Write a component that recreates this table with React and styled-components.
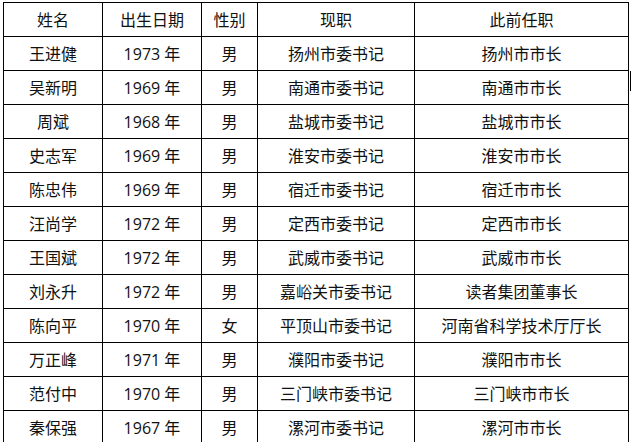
import styled, { createGlobalStyle } from "styled-components";

const GlobalStyle = createGlobalStyle`
  html, body {
    margin: 0;
    padding: 0;
    background: #fff;
    overflow: hidden;
  }
  body {
    font-family: "Open Sans", "Noto Sans CJK SC", sans-serif;
  }
`;

const columns = [
  { key: "name", label: "姓名", width: 99 },
  { key: "born", label: "出生日期", width: 99 },
  { key: "sex", label: "性别", width: 56 },
  { key: "now", label: "现职", width: 157 },
  { key: "before", label: "此前任职", width: 214 },
];

const template = columns.map((c) => `${c.width}px`).join(" ");

const rows = [
  ["王进健", "1973 年", "男", "扬州市委书记", "扬州市市长"],
  ["吴新明", "1969 年", "男", "南通市委书记", "南通市市长"],
  ["周斌", "1968 年", "男", "盐城市委书记", "盐城市市长"],
  ["史志军", "1969 年", "男", "淮安市委书记", "淮安市市长"],
  ["陈忠伟", "1969 年", "男", "宿迁市委书记", "宿迁市市长"],
  ["汪尚学", "1972 年", "男", "定西市委书记", "定西市市长"],
  ["王国斌", "1972 年", "男", "武威市委书记", "武威市市长"],
  ["刘永升", "1972 年", "男", "嘉峪关市委书记", "读者集团董事长"],
  ["陈向平", "1970 年", "女", "平顶山市委书记", "河南省科学技术厅厅长"],
  ["万正峰", "1971 年", "男", "濮阳市委书记", "濮阳市市长"],
  ["范付中", "1970 年", "男", "三门峡市委书记", "三门峡市市长"],
  ["秦保强", "1967 年", "男", "漯河市委书记", "漯河市市长"],
];

const Page = styled.div`
  position: relative;
  padding: 2px 0 0 3px;
`;

const Table = styled.div`
  display: flex;
  flex-direction: column;
  width: 625px;
  border-left: 1px solid #000;
  border-top: 1px solid #000;
  color: #111;
  font-size: 16px;
`;

const Row = styled.div`
  display: grid;
  grid-template-columns: ${template};
  height: 34px;
`;

const Cell = styled.div`
  box-sizing: border-box;
  border-right: 1px solid #000;
  border-bottom: 1px solid #000;
  display: flex;
  align-items: center;
  justify-content: center;
  line-height: 20px;
  white-space: nowrap;
`;

const Caret = styled.div`
  position: absolute;
  left: 630px;
  top: 71px;
  width: 1px;
  height: 20px;
  background: #000;
`;

export default function App() {
  return (
    <>
      <GlobalStyle />
      <Page>
        <Table>
          <Row>
            {columns.map((c) => (
              <Cell key={c.key}>{c.label}</Cell>
            ))}
          </Row>
          {rows.map((r) => (
            <Row key={r[0]}>
              {r.map((v, i) => (
                <Cell key={i}>{v}</Cell>
              ))}
            </Row>
          ))}
        </Table>
        <Caret />
      </Page>
    </>
  );
}
